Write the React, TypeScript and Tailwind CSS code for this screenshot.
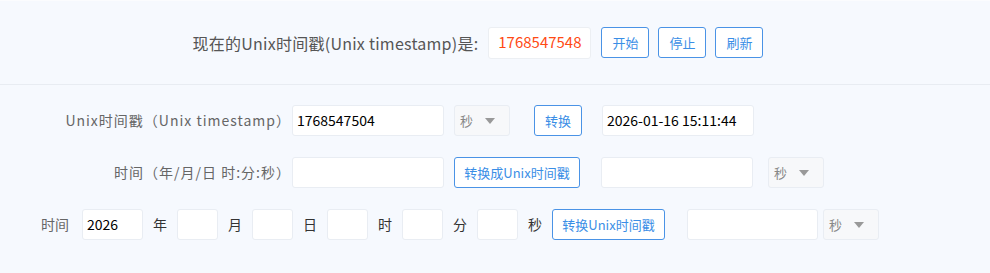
import React from "react";

const font = { fontFamily: '"Noto Sans CJK SC", "Noto Sans", sans-serif' };

const Input = ({ value = "", className = "" }: { value?: string; className?: string }) => (
  <div
    className={`shrink-0 h-[31px] flex items-center px-[4px] bg-white border border-[#e9edf3] rounded-[3px] text-[14px] text-black whitespace-nowrap ${className}`}
  >
    {value}
  </div>
);

const Select = ({ className = "" }: { className?: string }) => (
  <div
    className={`shrink-0 h-[31px] w-[56px] flex items-center justify-between pl-[5px] pr-[14px] bg-[#f7f8fa] border border-[#e9edf3] rounded-[3px] text-[13px] text-[#888] ${className}`}
  >
    秒
    <span className="w-0 h-0 border-l-[5px] border-r-[5px] border-t-[6px] border-l-transparent border-r-transparent border-t-[#999]" />
  </div>
);

const Btn = ({ label, className = "" }: { label: string; className?: string }) => (
  <div
    className={`shrink-0 h-[31px] flex items-center justify-center bg-white border border-[#4a93e6] rounded-[3px] text-[13px] text-[#3a8ee6] whitespace-nowrap ${className}`}
  >
    {label}
  </div>
);

const Unit = ({ t }: { t: string }) => (
  <span className="shrink-0 w-[14px] text-[14px] text-[#333] text-center">{t}</span>
);

export default function App() {
  return (
    <div style={font} className="w-[990px] h-[273px] bg-[#f6f9fe] border-t border-[#fbfcfe]">
      <div className="h-[84px] flex items-center justify-center border-b border-[#e8ecf2] pr-[34px]">
        <span className="text-[16px] text-[#555] tracking-[0.25px] whitespace-nowrap">现在的Unix时间戳(Unix timestamp)是:</span>
        <div className="shrink-0 h-[32px] w-[103px] ml-[10px] flex items-center justify-center bg-white border border-[#eceff3] rounded-[3px] text-[15px] text-[#ff4a14]">
          1768547548
        </div>
        <div className="flex gap-[9px] ml-[10px]">
          <Btn label="开始" className="w-[48px]" />
          <Btn label="停止" className="w-[48px]" />
          <Btn label="刷新" className="w-[48px]" />
        </div>
      </div>

      <div className="pt-[20px] flex flex-col gap-[21px]">
        <div className="flex items-center">
          <span className="shrink-0 w-[291px] text-right text-[14px] text-[#666] tracking-[1px] whitespace-nowrap">Unix时间戳（Unix timestamp）</span>
          <Input value="1768547504" className="ml-[1px] w-[152px]" />
          <Select className="ml-[10px]" />
          <Btn label="转换" className="ml-[24px] w-[48px] h-[30px]" />
          <Input value="2026-01-16 15:11:44" className="ml-[20px] w-[152px]" />
        </div>

        <div className="flex items-center">
          <span className="shrink-0 w-[291px] text-right text-[14px] text-[#666] tracking-[1px] whitespace-nowrap">时间（年/月/日 时:分:秒）</span>
          <Input className="ml-[1px] w-[152px]" />
          <Btn label="转换成Unix时间戳" className="ml-[10px] w-[126px] h-[30px]" />
          <Input className="ml-[21px] w-[152px]" />
          <Select className="ml-[15px]" />
        </div>

        <div className="flex items-center gap-[10px] pl-[41px]">
          <span className="shrink-0 w-[31px] text-[14px] text-[#666] whitespace-nowrap">时间</span>
          <Input value="2026" className="w-[61px]" />
          <Unit t="年" />
          <Input className="w-[41px]" />
          <Unit t="月" />
          <Input className="w-[41px]" />
          <Unit t="日" />
          <Input className="w-[41px]" />
          <Unit t="时" />
          <Input className="w-[41px]" />
          <Unit t="分" />
          <Input className="w-[41px]" />
          <Unit t="秒" />
          <Btn label="转换Unix时间戳" className="w-[113px] h-[30px]" />
          <Input className="ml-[12px] w-[131px]" />
          <Select className="-ml-[5px]" />
        </div>
      </div>
    </div>
  );
}
